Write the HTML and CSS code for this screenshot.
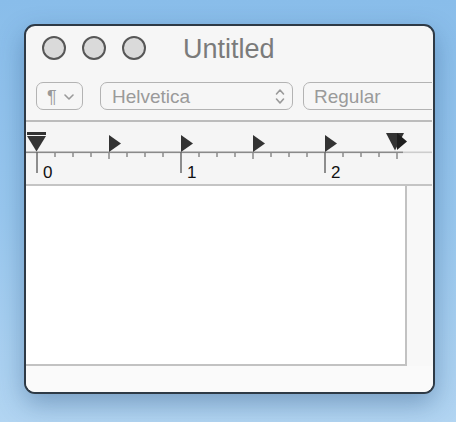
FILE: index.html
```html
<!DOCTYPE html>
<html>
<head>
<meta charset="utf-8">
<link rel="stylesheet" href="styles.css">
</head>
<body>
<div class="window">
  <div class="titlebar">
    <div class="lights">
      <span class="light"></span>
      <span class="light"></span>
      <span class="light"></span>
    </div>
    <div class="title">Untitled</div>
  </div>
  <div class="inner">
    <div class="toolbar">
      <div class="btn btn-para">
        <span class="pilcrow">¶</span>
        <svg class="chev" width="10" height="6" viewBox="0 0 10 6"><path d="M1 1 L5 5 L9 1" fill="none" stroke="#9a9a9a" stroke-width="1.6" stroke-linecap="round" stroke-linejoin="round"/></svg>
      </div>
      <div class="btn btn-font">
        <span class="label">Helvetica</span>
        <svg class="updown" width="10" height="17" viewBox="0 0 10 17"><path d="M1.5 6 L5 2 L8.5 6 M1.5 11 L5 15 L8.5 11" fill="none" stroke="#9a9a9a" stroke-width="1.6" stroke-linecap="round" stroke-linejoin="round"/></svg>
      </div>
      <div class="btn btn-style">
        <span class="label">Regular</span>
      </div>
    </div>
    <div class="sep"></div>
    <div class="ruler">
      <svg width="406" height="62" viewBox="0 0 406 62">
        <rect x="0" y="29.5" width="377" height="1.6" fill="#8a8a8a"/>
        <rect x="377" y="29.5" width="29" height="1.6" fill="#cdcdcd"/>
        <g stroke="#8a8a8a" stroke-width="1.5">
          <line x1="29" y1="30" x2="29" y2="35"/>
          <line x1="47" y1="30" x2="47" y2="35"/>
          <line x1="65" y1="30" x2="65" y2="35"/>
          <line x1="83" y1="30" x2="83" y2="37"/>
          <line x1="101" y1="30" x2="101" y2="35"/>
          <line x1="119" y1="30" x2="119" y2="35"/>
          <line x1="137" y1="30" x2="137" y2="35"/>
          <line x1="173" y1="30" x2="173" y2="35"/>
          <line x1="191" y1="30" x2="191" y2="35"/>
          <line x1="209" y1="30" x2="209" y2="35"/>
          <line x1="227" y1="30" x2="227" y2="37"/>
          <line x1="245" y1="30" x2="245" y2="35"/>
          <line x1="263" y1="30" x2="263" y2="35"/>
          <line x1="281" y1="30" x2="281" y2="35"/>
          <line x1="317" y1="30" x2="317" y2="35"/>
          <line x1="335" y1="30" x2="335" y2="35"/>
          <line x1="353" y1="30" x2="353" y2="35"/>
          <line x1="371" y1="30" x2="371" y2="37"/>
        </g>
        <g stroke="#6a6a6a" stroke-width="1.5">
          <line x1="11" y1="30" x2="11" y2="51"/>
          <line x1="155" y1="30" x2="155" y2="51"/>
          <line x1="299" y1="30" x2="299" y2="51"/>
        </g>
        <g fill="#333">
          <rect x="1" y="10" width="19" height="3"/>
          <polygon points="1,14 20,14 10.5,29.5"/>
          <polygon points="83,13 83,30 95,21.5"/>
          <polygon points="155,13 155,30 167,21.5"/>
          <polygon points="227,13 227,30 239,21.5"/>
          <polygon points="299,13 299,30 311,21.5"/>
          <polygon points="360,11 378,11 369,28.5"/>
          <polygon points="371,11 371,28 381,19.5" fill="#1e1e1e"/>
        </g>
        <text x="17" y="55.5" class="num">0</text>
        <text x="161" y="55.5" class="num">1</text>
        <text x="305" y="55.5" class="num">2</text>
      </svg>
    </div>
    <div class="sep2"></div>
  </div>
  <div class="content">
    <div class="doc"></div>
    <div class="gutter"></div>
  </div>
  <div class="footer"></div>
</div>
</body>
</html>
```

FILE: styles.css
```css
html, body {
  margin: 0;
  padding: 0;
}
body {
  width: 456px;
  height: 422px;
  overflow: hidden;
  background: linear-gradient(180deg, #89bdea 0%, #98c7ee 50%, #b2d5f2 100%);
  padding: 24px 0 0 24px;
  box-sizing: border-box;
  font-family: "Liberation Sans", Arial, sans-serif;
}
.window {
  width: 411px;
  height: 370px;
  box-sizing: border-box;
  border: 2px solid #2e3a46;
  border-radius: 11px;
  background: #f6f6f6;
  overflow: hidden;
  display: flex;
  flex-direction: column;
  box-shadow: 0 10px 26px rgba(20, 60, 110, 0.35);
}
.titlebar {
  height: 44px;
  display: flex;
  align-items: center;
  flex: none;
}
.lights {
  display: flex;
  gap: 16px;
  padding-left: 16px;
}
.light {
  width: 24px;
  height: 24px;
  box-sizing: border-box;
  border-radius: 50%;
  border: 2px solid #575757;
  background: #dadada;
}
.title {
  margin-left: 37px;
  font-size: 27px;
  color: #7b7b7b;
  line-height: 30px;
  padding-top: 1px;
}
.inner {
  margin-right: 1px;
  overflow: hidden;
  flex: none;
}
.toolbar {
  display: flex;
  margin-top: 12px;
  height: 28px;
  padding-left: 10px;
  white-space: nowrap;
}
.btn {
  box-sizing: border-box;
  height: 28px;
  border: 1.5px solid #b3b3b3;
  border-radius: 7px;
  display: flex;
  align-items: center;
  color: #9a9a9a;
  font-size: 19px;
  flex: none;
}
.btn-para {
  width: 47px;
  padding-left: 10px;
}
.pilcrow {
  font-size: 18px;
  color: #999;
  padding-top: 2px;
}
.chev {
  margin-left: 7px;
  margin-top: 1px;
}
.btn-font {
  width: 193px;
  margin-left: 17px;
  padding-left: 11px;
  justify-content: space-between;
  padding-right: 7px;
}
.btn-style {
  width: 160px;
  margin-left: 10px;
  padding-left: 10px;
}
.label {
  line-height: 22px;
  padding-top: 2px;
}
.sep {
  margin-top: 10px;
  height: 2px;
  background: #bcbcbc;
}
.ruler {
  height: 62px;
  background: #f5f5f5;
}
.ruler svg {
  display: block;
}
.num {
  font-family: "Liberation Sans", Arial, sans-serif;
  font-size: 17px;
  fill: #111;
}
.sep2 {
  height: 2px;
  background: #c4c4c4;
}
.content {
  display: flex;
  height: 180px;
  flex: none;
}
.doc {
  width: 379px;
  height: 178px;
  background: #ffffff;
  border-right: 2px solid #c2c2c2;
  border-bottom: 2px solid #c2c2c2;
  flex: none;
}
.gutter {
  flex: 1;
  background: #f8f8f8;
}
.footer {
  flex: 1;
  background: #fafafa;
}
```
